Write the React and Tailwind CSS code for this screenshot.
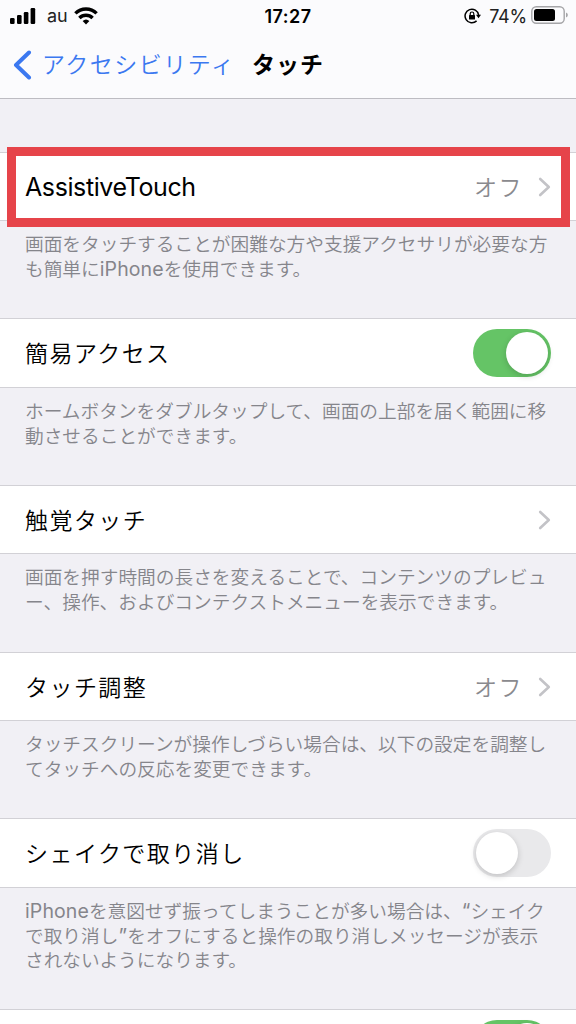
import { useState } from 'react';

const Chevron = () => (
  <svg width="14" height="20" viewBox="0 0 14 20" fill="none" className="shrink-0">
    <path d="M3.2 2 L11.8 10 L3.2 18" stroke="#c3c3c7" strokeWidth="2.6" strokeLinecap="round" strokeLinejoin="round" />
  </svg>
);

const Switch = ({ on, onClick }) => (
  <button
    type="button"
    role="switch"
    aria-checked={on}
    onClick={onClick}
    className={`flex h-12 w-[78px] shrink-0 items-center rounded-full p-[3px] ${
      on ? 'justify-end bg-[#65c466]' : 'justify-start bg-[#e9e9eb]'
    }`}
  >
    <span className="size-[42px] rounded-full bg-white shadow-[0_2px_6px_rgba(0,0,0,0.18)]" />
  </button>
);

const Latin = ({ children }) => (
  <span className="font-['Inter'] text-[19.5px] leading-none font-normal tracking-[0.1px]">{children}</span>
);

const StatusBar = () => (
  <div className="grid h-8 grid-cols-3 items-center pr-[7px] pl-[9px] text-black">
    <div className="flex items-center">
      <svg width="27" height="18" viewBox="0 0 27 18" className="-mt-px">
        <rect x="1" y="11" width="4.6" height="6" rx="1.2" />
        <rect x="8" y="8" width="4.6" height="9" rx="1.2" />
        <rect x="14.8" y="5" width="4.6" height="12" rx="1.2" />
        <rect x="21.6" y="1" width="4.6" height="16" rx="1.2" />
      </svg>
      <span className="ml-[11px] text-[18px] leading-8 text-[#222]">au</span>
      <svg width="24" height="18" viewBox="0 0 24 18" fill="none" stroke="#000" strokeWidth="3.4" className="-mt-px ml-[6px]">
        <path d="M1.4 6.4 A15 15 0 0 1 22.6 6.4" />
        <path d="M5.4 11 A9.3 9.3 0 0 1 18.6 11" />
        <path d="M12 17.4 L8.6 14 A5 5 0 0 1 15.4 14 Z" fill="#000" stroke="none" />
      </svg>
    </div>
    <div className="pr-[2px] text-center text-[18px] font-semibold tracking-[0.5px]">17:27</div>
    <div className="flex items-center justify-end">
      <svg width="17" height="16" viewBox="0 0 17 16" fill="none" className="mr-2">
        <path d="M12.6 12.9 A6.8 6.8 0 1 1 14.6 7" stroke="#000" strokeWidth="1.5" />
        <path d="M12 6.8 H17 L14.5 10.2 Z" fill="#000" />
        <rect x="5" y="7" width="6" height="4.6" rx="0.6" fill="#000" />
        <path d="M6.2 7.4 V5.8 a1.8 1.8 0 0 1 3.6 0 V7.4" stroke="#000" strokeWidth="1.2" />
      </svg>
      <span className="text-[18px] tracking-[-0.2px] text-[#222]">74%</span>
      <svg width="38" height="18" viewBox="0 0 38 18" className="-mt-[2px] ml-1">
        <rect x="0.8" y="0.8" width="32.4" height="16.4" rx="4.5" fill="none" stroke="#a5a5a8" strokeWidth="1.4" />
        <rect x="3" y="3" width="21" height="12" rx="2.5" />
        <path d="M35 6.5 a2.6 2.6 0 0 1 0 5 Z" fill="#a5a5a8" />
      </svg>
    </div>
  </div>
);

const sections = [
  {
    id: 'assistive',
    label: <span className="block pt-[4px] font-['Inter'] text-[25px] font-normal tracking-[-0.4px]">AssistiveTouch</span>,
    value: 'オフ',
    highlight: true,
    rowClass: 'h-[69px]',
    noteClass: 'h-[97px]',
    note: [
      '画面をタッチすることが困難な方や支援アクセサリが必要な方',
      <>も簡単に<Latin>iPhone</Latin>を使用できます。</>,
    ],
  },
  {
    id: 'reachability',
    label: '簡易アクセス',
    toggle: true,
    rowClass: 'h-[70px]',
    noteClass: 'h-[97px]',
    note: ['ホームボタンをダブルタップして、画面の上部を届く範囲に移', '動させることができます。'],
  },
  {
    id: 'haptic',
    label: '触覚タッチ',
    rowClass: 'h-[69px]',
    noteClass: 'h-[98px]',
    note: ['画面を押す時間の長さを変えることで、コンテンツのプレビュ', 'ー、操作、およびコンテクストメニューを表示できます。'],
  },
  {
    id: 'accommodations',
    label: 'タッチ調整',
    value: 'オフ',
    rowClass: 'h-[69px]',
    noteClass: 'h-[97px]',
    note: ['タッチスクリーンが操作しづらい場合は、以下の設定を調整し', 'てタッチへの反応を変更できます。'],
  },
  {
    id: 'shake',
    label: 'シェイクで取り消し',
    toggle: true,
    rowClass: 'h-[70px]',
    noteClass: 'h-[121px]',
    note: [
      <><Latin>iPhone</Latin>を意図せず振ってしまうことが多い場合は、<Latin>“</Latin>シェイク</>,
      <>で取り消し<Latin>”</Latin>をオフにすると操作の取り消しメッセージが表示</>,
      'されないようになります。',
    ],
  },
  { id: 'vibration', label: '', toggle: true, rowClass: 'h-[70px]', noteClass: '', note: [] },
];

export default function App() {
  const [switches, setSwitches] = useState({ reachability: true, shake: false, vibration: true });

  const toggle = (id) => setSwitches({ ...switches, [id]: !switches[id] });

  return (
    <div className="h-screen w-full overflow-hidden bg-[#f1f0f5] font-['Inter','Noto_Sans_CJK_JP',sans-serif] whitespace-nowrap">
      <header className="h-[99px] border-b border-[#bdbcc2] bg-[#fbfbfd]">
        <StatusBar />
        <div className="flex h-[66px] items-center pl-[13px]">
          <svg width="19" height="30" viewBox="0 0 19 30" fill="none">
            <path d="M16 2.5 L3 15 L16 27.5" stroke="#3b78f0" strokeWidth="4" strokeLinecap="round" strokeLinejoin="round" />
          </svg>
          <a href="#" className="ml-[10px] w-[210px] pb-[4px] font-['Noto_Sans_CJK_JP',sans-serif] text-[23px] font-[350] tracking-[1.5px] text-[#3b78f0]">
            アクセシビリティ
          </a>
          <h1 className="pb-[4px] font-['Noto_Sans_CJK_JP',sans-serif] text-[23px] font-bold tracking-[1px] text-black">タッチ</h1>
        </div>
      </header>

      <main className="pt-[53px] font-['Noto_Sans_CJK_JP',sans-serif] font-[350]">
        {sections.map((s) => (
          <section key={s.id}>
            <div className={`relative flex items-center border-y border-[#d2d1d6] bg-white pr-[25px] pl-[25px] ${s.rowClass}`}>
              <span className="flex-1 pb-px text-[23px] tracking-[1.45px] text-black">{s.label}</span>
              {s.value && <span className="mr-[14px] pb-px text-[23px] tracking-[1.45px] text-[#8a8a8e]">{s.value}</span>}
              {s.toggle ? <Switch on={switches[s.id]} onClick={() => toggle(s.id)} /> : <Chevron />}
              {s.highlight && (
                <div className="pointer-events-none absolute -top-[6px] right-[6px] left-[7px] h-20 border-[9px] border-[#e6444a]" />
              )}
            </div>
            <div className={`pt-[10px] pl-[25px] text-[18.7px] leading-[24.5px] text-[#85858b] ${s.noteClass}`}>
              {s.note.map((line, i) => (
                <p key={i} className="h-[24.5px]">{line}</p>
              ))}
            </div>
          </section>
        ))}
      </main>
    </div>
  );
}
